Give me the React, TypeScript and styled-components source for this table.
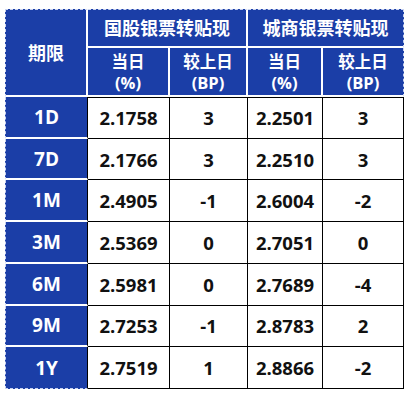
import { Fragment } from 'react';
import styled, { createGlobalStyle, css } from 'styled-components';

const GlobalStyle = createGlobalStyle`
  html, body {
    margin: 0;
    padding: 0;
    background: #fff;
  }
  body {
    font-family: "Open Sans", "Noto Sans CJK SC", sans-serif;
  }
`;

const BLUE = '#1b3ea7';
const DASH = '1px dashed #c9d3f0';

const Page = styled.div`
  padding: 9px 0 0 5px;
`;

const Grid = styled.div`
  display: grid;
  width: 399px;
  grid-template-columns: 83px 82px 78px 75px 81px;
  grid-template-rows: 39px 49px repeat(7, 41.71px);
`;

const HeadCell = styled.div<{ $top?: boolean; $first?: boolean; $last?: boolean; $span?: string }>`
  box-sizing: border-box;
  background: ${BLUE};
  color: #fff;
  font-weight: 700;
  display: flex;
  flex-direction: column;
  align-items: center;
  justify-content: center;
  text-align: center;
  border-right: 2px solid #fff;
  border-bottom: 2px solid #fff;
  font-family: "Noto Sans CJK SC", sans-serif;
  font-size: 18px;
  line-height: 1.2;
  ${({ $span }) => $span && css`grid-area: ${$span};`}
  ${({ $top }) => $top && css`border-top: ${DASH};`}
  ${({ $first }) => $first && css`border-left: ${DASH};`}
  ${({ $last }) => $last && css`border-right: ${DASH};`}
`;

const SubHead = styled(HeadCell)`
  font-size: 16.5px;
  line-height: 22px;
  padding-top: 1px;
`;

const Paren = styled.span`
  font-family: "Open Sans", "Noto Sans CJK SC", sans-serif;
  font-size: 16.5px;
`;

const PeriodCell = styled.div<{ $end?: boolean }>`
  box-sizing: border-box;
  background: ${BLUE};
  color: #fff;
  font-weight: 700;
  font-size: 19px;
  display: flex;
  align-items: center;
  justify-content: center;
  border-left: ${DASH};
  border-right: 1px solid #000;
  border-bottom: ${({ $end }) => ($end ? DASH : '2px solid #fff')};
`;

const DataCell = styled.div<{ $first?: boolean }>`
  box-sizing: border-box;
  color: #111;
  font-weight: 700;
  font-size: 18.5px;
  display: flex;
  align-items: center;
  justify-content: center;
  border-right: 1px solid #000;
  border-bottom: 1px solid #000;
  ${({ $first }) => $first && css`border-top: 1px solid #000;`}
`;

const rows = [
  ['1D', '2.1758', '3', '2.2501', '3'],
  ['7D', '2.1766', '3', '2.2510', '3'],
  ['1M', '2.4905', '-1', '2.6004', '-2'],
  ['3M', '2.5369', '0', '2.7051', '0'],
  ['6M', '2.5981', '0', '2.7689', '-4'],
  ['9M', '2.7253', '-1', '2.8783', '2'],
  ['1Y', '2.7519', '1', '2.8866', '-2'],
];

export default function App() {
  return (
    <Page>
      <GlobalStyle />
      <Grid>
        <HeadCell $top $first $span="1 / 1 / 3 / 2">期限</HeadCell>
        <HeadCell $top $span="1 / 2 / 2 / 4">国股银票转贴现</HeadCell>
        <HeadCell $top $last $span="1 / 4 / 2 / 6">城商银票转贴现</HeadCell>
        <SubHead>
          <span>当日</span>
          <Paren>(%)</Paren>
        </SubHead>
        <SubHead>
          <span>较上日</span>
          <Paren>(BP)</Paren>
        </SubHead>
        <SubHead>
          <span>当日</span>
          <Paren>(%)</Paren>
        </SubHead>
        <SubHead $last>
          <span>较上日</span>
          <Paren>(BP)</Paren>
        </SubHead>
        {rows.map((r, i) => (
          <Fragment key={r[0]}>
            <PeriodCell $end={i === rows.length - 1}>{r[0]}</PeriodCell>
            {r.slice(1).map((v, j) => (
              <DataCell key={j} $first={i === 0}>{v}</DataCell>
            ))}
          </Fragment>
        ))}
      </Grid>
    </Page>
  );
}
